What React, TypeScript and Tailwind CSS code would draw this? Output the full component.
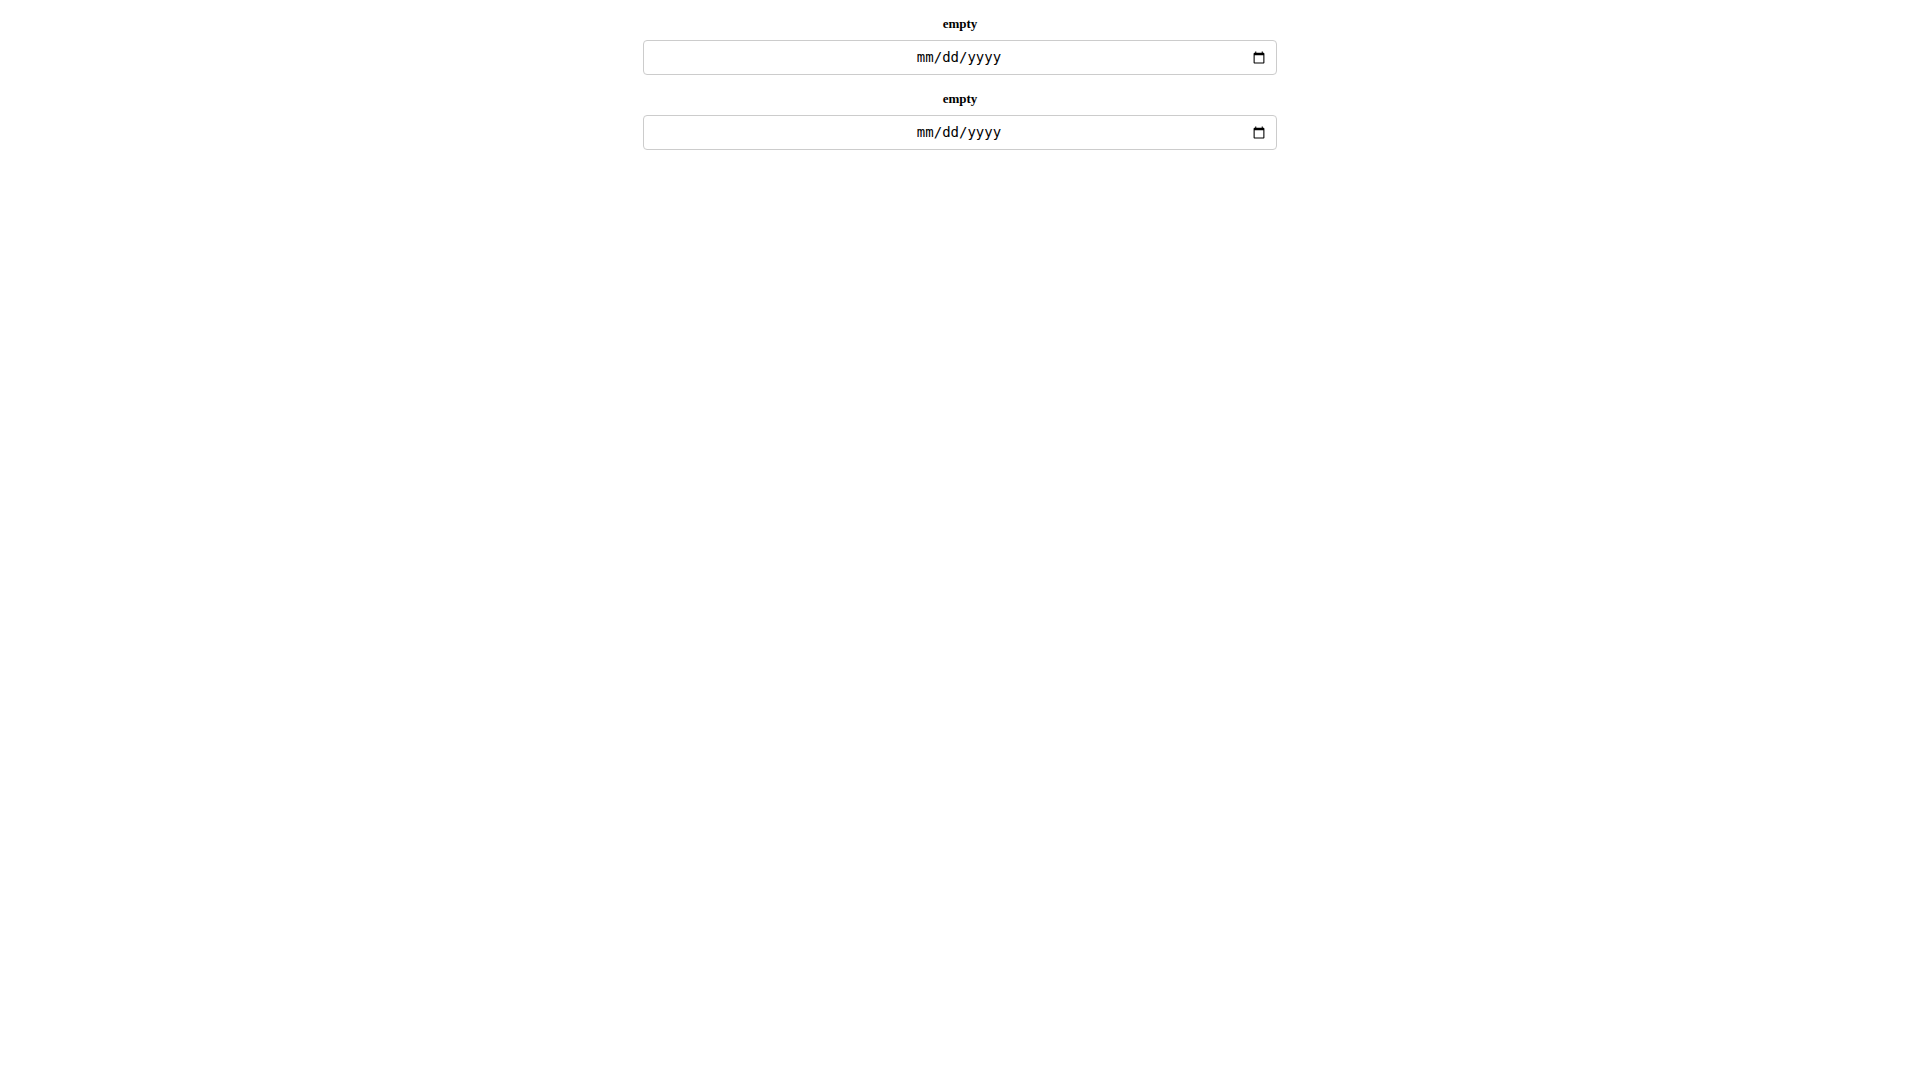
function DateField({ id }: { id: string }) {
  return (
    <div className="flex flex-col items-center">
      <label htmlFor={id} className="mt-2 mb-2 text-[13px] leading-4 font-bold">
        empty
      </label>
      <input
        id={id}
        type="date"
        lang="en-US"
        className="box-border h-[35px] w-full rounded border border-[#cccccc] bg-white py-1 pr-2 pl-6 text-center font-['DejaVu_Sans_Mono',monospace] text-[14px] text-black [&::-webkit-datetime-edit]:block [&::-webkit-datetime-edit]:text-center [&::-webkit-datetime-edit-day-field]:px-0 [&::-webkit-datetime-edit-month-field]:px-0 [&::-webkit-datetime-edit-year-field]:px-0"
      />
    </div>
  );
}

export default function App() {
  return (
    <main className="mx-auto flex w-1/3 flex-col gap-2 bg-white px-[3px] py-2 font-['Liberation_Serif',serif] text-black">
      <DateField id="first-date" />
      <DateField id="second-date" />
    </main>
  );
}
